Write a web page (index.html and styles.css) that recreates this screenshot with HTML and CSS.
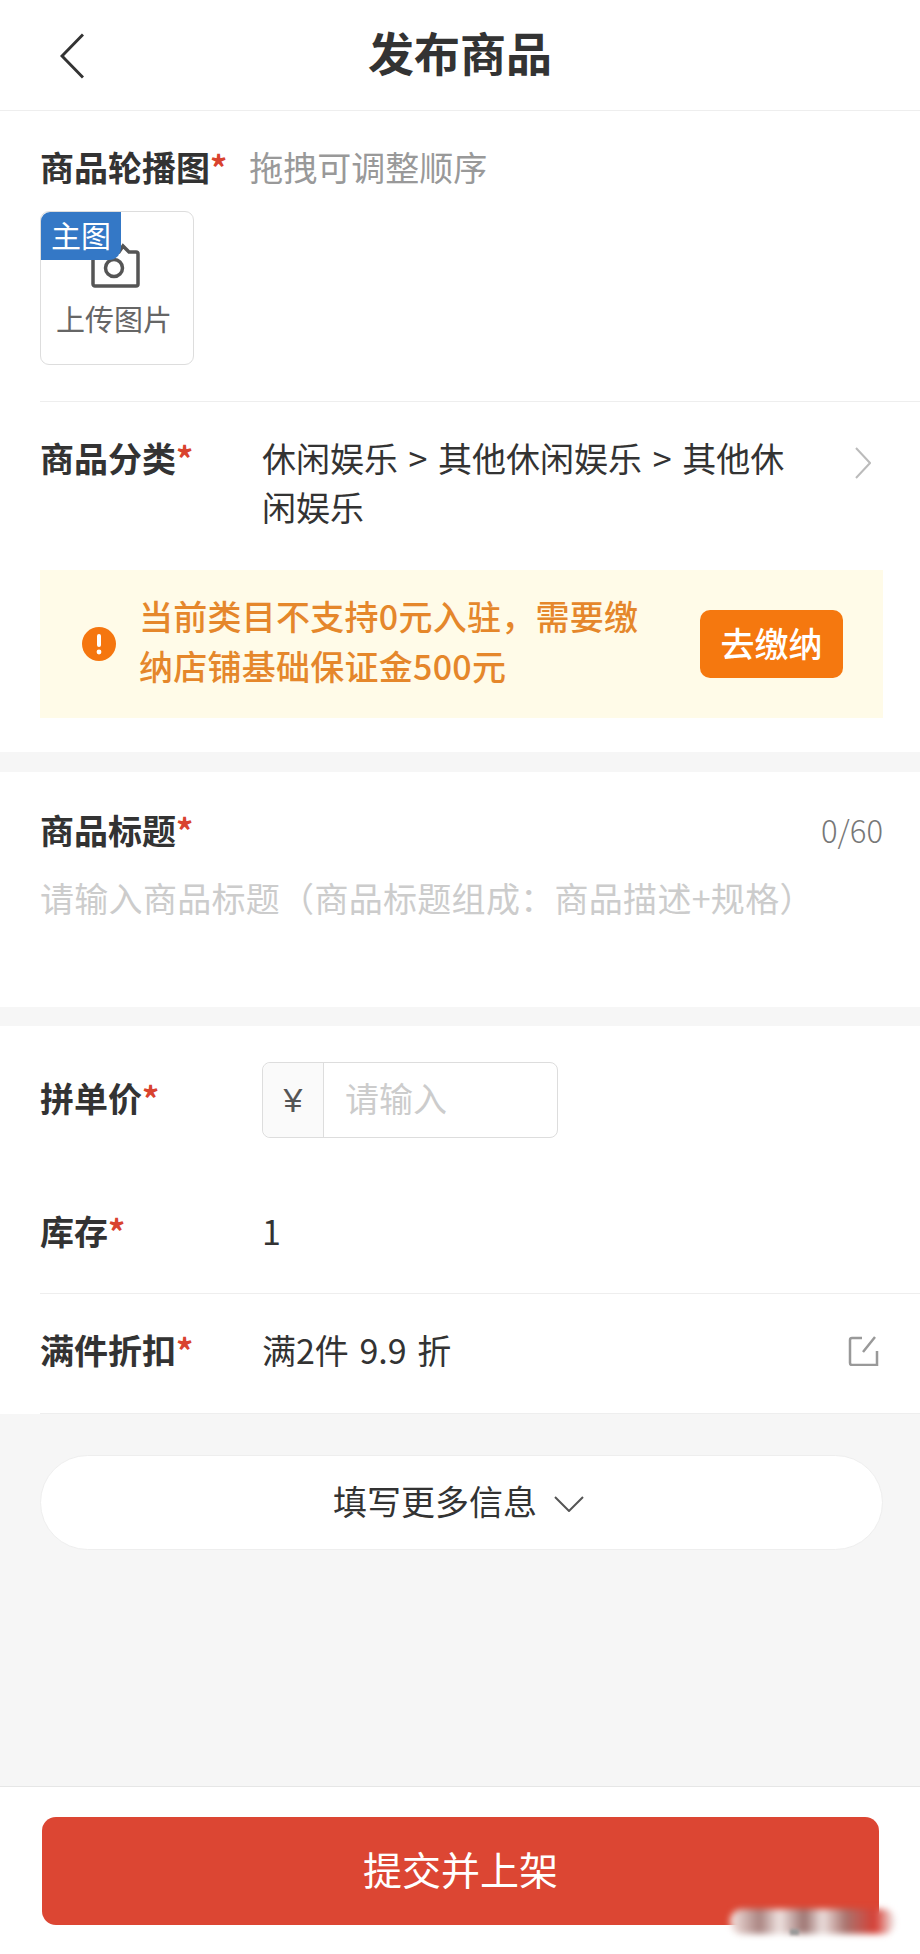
FILE: index.html
```html
<!DOCTYPE html>
<html lang="zh-CN">
<head>
  <meta charset="UTF-8">
  <meta name="viewport" content="width=device-width, initial-scale=1.0">
  <title>发布商品</title>
  <link rel="stylesheet" href="styles.css">
</head>
<body>

<div class="page">
  <header class="topbar">
    <svg class="back-icon" width="24" height="46" viewBox="0 0 24 46"><path d="M23 1.500 2 23l21 21.500"/></svg>
    <h1>发布商品</h1>
  </header>

  <section class="card">
    <div class="block block-images">
      <div class="label-line">
        <span class="label">商品轮播图<i>*</i></span>
        <span class="hint">拖拽可调整顺序</span>
      </div>
      <div class="upload">
        <span class="upload-badge">主图</span>
        <svg class="camera-icon" width="52" height="46" viewBox="0 0 52 46">
          <path d="M4 9h24l4-6 6 6h7a2 2 0 0 1 2 2v30a2 2 0 0 1-2 2H4a2 2 0 0 1-2-2V11z"/>
          <circle cx="23" cy="25" r="8.500"/>
        </svg>
        <span class="upload-text">上传图片</span>
      </div>
    </div>

    <div class="row row-category">
      <span class="label row-label">商品分类<i>*</i></span>
      <span class="value">休闲娱乐 &gt; 其他休闲娱乐 &gt; 其他休闲娱乐</span>
      <svg class="arrow-icon" width="16" height="32" viewBox="0 0 16 32"><path d="M1 1l14 15L1 31"/></svg>
    </div>

    <div class="notice">
      <svg class="notice-icon" width="34" height="34" viewBox="0 0 34 34">
        <circle cx="17" cy="17" r="17" fill="#f5760f"/>
        <rect x="15" y="7" width="4" height="13" rx="2" fill="#fff"/>
        <circle cx="17" cy="25" r="2.400" fill="#fff"/>
      </svg>
      <p>当前类目不支持0元入驻，需要缴纳店铺基础保证金500元</p>
      <button class="notice-btn">去缴纳</button>
    </div>
  </section>

  <section class="card card-title">
    <div class="title-head">
      <span class="label">商品标题<i>*</i></span>
      <span class="count">0/60</span>
    </div>
    <p class="placeholder">请输入商品标题（商品标题组成：商品描述+规格）</p>
  </section>

  <section class="card card-price">
    <div class="row row-price">
      <span class="label row-label">拼单价<i>*</i></span>
      <div class="price-input">
        <span class="price-unit">¥</span>
        <span class="placeholder price-text">请输入</span>
      </div>
    </div>
    <div class="row row-stock">
      <span class="label row-label">库存<i>*</i></span>
      <span class="value">1</span>
    </div>
    <div class="row row-discount">
      <span class="label row-label">满件折扣<i>*</i></span>
      <span class="value">满2件 9.9 折</span>
      <svg class="edit-icon" width="31" height="30" viewBox="0 0 31 30"><path d="M14 2H4a2 2 0 0 0-2 2v23a2 2 0 0 0 2 2h25v-14M15 16 27 1"/></svg>
    </div>
  </section>

  <button class="more-btn">
    填写更多信息
    <svg width="30" height="16" viewBox="0 0 30 16"><path d="M1 1l14 14L29 1"/></svg>
  </button>

  <footer class="submit-bar">
    <button class="submit-btn">提交并上架</button>
    <span class="smudge"></span>
    <span class="smudge-mark"></span>
  </footer>
</div>

</body>
</html>
```

FILE: styles.css
```css
body {
  margin: 0;
  background-color: #f6f6f6;
  color: #333;
  font-family: "Noto Sans CJK SC", "Noto Sans", sans-serif;
  font-size: 34px;
  line-height: 50px;
}
button {
  font-family: inherit;
  border: none;
  padding: 0;
}
p, h1 {
  margin: 0;
}
.page {
  min-height: 100vh;
  display: flex;
  flex-direction: column;
}

/* header */
.topbar {
  height: 110px;
  background-color: #fff;
  border-bottom: 1px solid #eee;
  display: flex;
  align-items: center;
  justify-content: center;
  position: relative;
}
.topbar h1 {
  font-size: 46px;
  font-weight: 700;
  line-height: 60px;
  margin-top: -8px;
  color: #333;
}
.back-icon {
  position: absolute;
  left: 60px;
  top: 33px;
  fill: none;
  stroke: #333;
  stroke-width: 3;
}

/* cards */
.card {
  background-color: #fff;
}
.label {
  font-weight: 700;
  color: #333;
  white-space: nowrap;
}
.label i {
  color: #d9432f;
  font-style: normal;
}
.block-images {
  margin-left: 40px;
  padding: 31px 0 36px;
  border-bottom: 1px solid #eee;
}
.label-line {
  display: flex;
  gap: 22px;
}
.hint {
  color: #999;
}
.upload {
  margin-top: 19px;
  width: 152px;
  height: 152px;
  border: 1px solid #ddd;
  border-radius: 9px;
  position: relative;
  display: flex;
  flex-direction: column;
  align-items: center;
}
.upload-badge {
  position: absolute;
  left: 0;
  top: 0;
  width: 80px;
  height: 48px;
  background-color: #3478c6;
  color: #fff;
  font-size: 30px;
  line-height: 44px;
  text-align: center;
  border-radius: 9px 0 12px 0;
}
.camera-icon {
  margin-top: 31px;
  fill: none;
  stroke: #555;
  stroke-width: 3.500;
}
.upload-text {
  font-size: 29px;
  line-height: 40px;
  color: #666;
  margin: 9px 6px 0 0;
}

/* rows */
.row {
  display: flex;
  align-items: flex-start;
  margin-left: 40px;
  padding-right: 37px;
}
.row-label {
  width: 222px;
  flex: none;
}
.value {
  color: #333;
  word-spacing: 3px;
}
.row-category {
  padding-top: 31px;
}
.row-category .value {
  width: 536px;
  line-height: 49px;
}
.arrow-icon {
  margin: 14px 0 0 57px;
  fill: none;
  stroke: #bbb;
  stroke-width: 2;
}
.notice {
  margin: 39px 37px 34px 40px;
  height: 148px;
  background-color: #fffbe8;
  display: flex;
  align-items: center;
  padding-left: 42px;
  box-sizing: border-box;
}
.notice-icon {
  flex: none;
}
.notice p {
  width: 510px;
  margin-left: 23px;
  padding-bottom: 6px;
  font-weight: 500;
  letter-spacing: 0.250px;
  color: #e5872b;
}
.notice-btn {
  margin-left: 51px;
  width: 143px;
  height: 68px;
  padding-bottom: 4px;
  background-color: #f5780f;
  color: #fff;
  font-size: 34px;
  font-weight: 500;
  border-radius: 10px;
}

/* title */
.card-title {
  margin-top: 20px;
  padding: 33px 37px 84px 40px;
}
.title-head {
  display: flex;
  justify-content: space-between;
}
.count {
  color: #777;
  font-size: 31px;
  font-weight: 300;
}
.placeholder {
  color: #ccc;
}
.card-title .placeholder {
  margin-top: 18px;
  letter-spacing: 0.300px;
}

/* price */
.card-price {
  margin-top: 19px;
}
.row-price {
  padding-top: 36px;
  align-items: center;
}
.row-price .row-label {
  margin-bottom: 5px;
}
.price-input {
  width: 296px;
  height: 76px;
  box-sizing: border-box;
  border: 1px solid #ddd;
  border-radius: 8px;
  display: flex;
  align-items: center;
}
.price-unit {
  width: 60px;
  height: 100%;
  background-color: #fafafa;
  border-right: 1px solid #ddd;
  border-radius: 8px 0 0 8px;
  text-align: center;
  line-height: 74px;
  font-family: "Liberation Sans", sans-serif;
  font-size: 34px;
  color: #555;
}
.price-text {
  margin: 0 0 4px 21px;
}
.row-stock {
  padding-top: 68px;
  padding-bottom: 37px;
  border-bottom: 1px solid #eee;
}
.row-discount {
  padding-top: 31px;
  padding-bottom: 38px;
  border-bottom: 1px solid #eee;
  position: relative;
}
.edit-icon {
  position: absolute;
  left: 808px;
  top: 42px;
  fill: none;
  stroke: #999;
  stroke-width: 2.500;
}

/* bottom */
.more-btn {
  margin: 41px 37px 0 40px;
  height: 95px;
  box-sizing: border-box;
  background-color: #fff;
  border: 1px solid #eee;
  border-radius: 48px;
  font-size: 34px;
  color: #333;
  display: flex;
  align-items: center;
  justify-content: center;
  gap: 17px;
  padding: 0 6px 4px 0;
}
.more-btn svg {
  fill: none;
  stroke: #555;
  stroke-width: 2;
  margin-top: 6px;
}
.submit-bar {
  margin-top: auto;
  height: 168px;
  box-sizing: border-box;
  background-color: #fff;
  border-top: 1px solid #e6e6e6;
  padding: 30px 41px 0 42px;
  position: relative;
}
.submit-btn {
  width: 100%;
  height: 108px;
  padding-bottom: 6px;
  background-color: #dc4633;
  color: #fff;
  border-radius: 14px;
  font-size: 39px;
}
.smudge {
  position: absolute;
  left: 730px;
  top: 122px;
  width: 165px;
  height: 25px;
  background: linear-gradient(90deg, #f6e6e3, #a98380 18%, #f0e4e2 30%, #9c7370 45%, #ece0de 56%, #a9746f 70%, #d63f35 88%, #f2f2f2);
  border-radius: 12px;
  filter: blur(3px);
}
.smudge-mark {
  position: absolute;
  left: 790px;
  top: 142px;
  width: 9px;
  height: 6px;
  background-color: #999;
  filter: blur(1.500px);
}
```
